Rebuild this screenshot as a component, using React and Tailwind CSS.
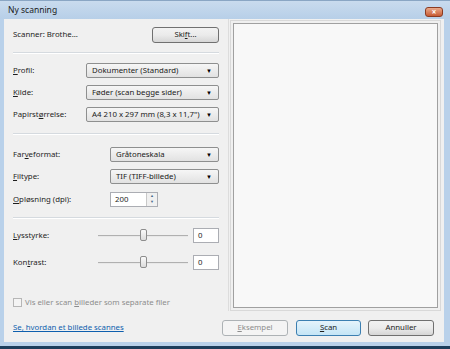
import React from "react";

const font = { fontFamily: '"Noto Sans", "Open Sans", sans-serif' };

// Small helper for a dropdown box
const Select = ({ value, width }) => (
  <div
    className={`flex h-[15px] items-center justify-between whitespace-nowrap rounded-[2px] border border-[#8e8f8f] bg-gradient-to-b from-[#f6f6f6] to-[#e2e2e2] pl-[5px] pr-[6px] text-[#1a1a1a] ${width}`}
  >
    <span>{value}</span>
    <span className="text-[6px] leading-none text-black">▼</span>
  </div>
);

const Separator = () => (
  <div className="flex flex-col">
    <div className="h-px bg-[#d5dadf]" />
    <div className="h-px bg-white" />
  </div>
);

const Slider = () => (
  <div className="relative h-[15px] w-[90px]">
    <div className="absolute left-0 right-0 top-[7px] h-[2px] border-t border-[#b0b0b0] bg-[#e8e8e8]" />
    <div className="absolute left-[42px] top-[1px] h-[12px] w-[7px] rounded-[2px] border border-[#8d8d8d] bg-gradient-to-b from-[#fafafa] to-[#dcdcdc]" />
  </div>
);

const App = () => {
  return (
    <div
      className="flex h-[349px] w-[450px] flex-col whitespace-nowrap bg-[#b9d1ea] text-[7.8px] text-[#1e1e1e]"
      style={font}
    >
      {/* Title bar */}
      <div className="flex h-[19px] items-center justify-between border-t border-[#8aa6c4] bg-gradient-to-b from-[#c9dbee] to-[#b7cfe8] pl-[8px] pr-[7px]">
        <span className="text-[8.5px] text-[#1a1a1a]">Ny scanning</span>
        <div className="mt-[4px] flex h-[10px] w-[18px] items-center justify-center rounded-[3px] border border-[#8b3b22] bg-gradient-to-b from-[#e9a98a] to-[#c75a32] text-[8px] font-bold leading-none text-white">
          ×
        </div>
      </div>

      <div className="flex flex-1">
        <div className="w-[4px]" />
        {/* Client area */}
        <div className="flex flex-1 flex-col bg-[#f0f0f0]">
          <div className="flex h-[292px]">
            {/* Left panel */}
            <div className="flex w-[224px] flex-col pl-[9px] pr-[9px]">
              <div className="mt-[8px] flex h-[16px] items-center justify-between">
                <span>Scanner: Brothe...</span>
                <div className="flex h-[16px] w-[67px] items-center justify-center rounded-[3px] border border-[#707070] bg-gradient-to-b from-[#f2f2f2] via-[#ebebeb] to-[#d6d6d6]">
                  Ski<u>f</u>t...
                </div>
              </div>
              <div className="mt-[9px]">
                <Separator />
              </div>

              <div className="mt-[9px] flex h-[15px] items-center justify-between">
                <span>
                  <u>P</u>rofil:
                </span>
                <Select value="Dokumenter (Standard)" width="w-[133px]" />
              </div>
              <div className="mt-[7px] flex h-[15px] items-center justify-between">
                <span>
                  <u>K</u>ilde:
                </span>
                <Select value="Føder (scan begge sider)" width="w-[133px]" />
              </div>
              <div className="mt-[7px] flex h-[15px] items-center justify-between">
                <span>
                  Papirst<u>ø</u>rrelse:
                </span>
                <Select value="A4 210 x 297 mm (8,3 x 11,7&quot;)" width="w-[133px]" />
              </div>
              <div className="mt-[11px] flex flex-col gap-px">
                <Separator />
              </div>

              <div className="mt-[12px] flex h-[15px] items-center justify-between">
                <span>
                  Far<u>v</u>eformat:
                </span>
                <Select value="Gråtoneskala" width="w-[109px]" />
              </div>
              <div className="mt-[7px] flex h-[15px] items-center justify-between">
                <span>
                  <u>F</u>iltype:
                </span>
                <Select value="TIF (TIFF-billede)" width="w-[109px]" />
              </div>
              <div className="mt-[8px] flex h-[15px] items-center">
                <span className="w-[97px]">
                  <u>O</u>pløsning (dpi):
                </span>
                <div className="flex h-[15px] w-[48px] border border-[#abadb3] bg-white">
                  <span className="flex-1 pl-[4px] leading-[13px]">200</span>
                  <div className="flex w-[11px] flex-col border-l border-[#c8c8c8] bg-[#f0f0f0] text-[4px] leading-[6px] text-[#4a6a8a]">
                    <span className="text-center">▲</span>
                    <span className="text-center">▼</span>
                  </div>
                </div>
              </div>
              <div className="mt-[10px]">
                <Separator />
              </div>

              <div className="mt-[9px] flex h-[15px] items-center">
                <span className="w-[85px]">
                  <u>L</u>ysstyrke:
                </span>
                <Slider />
                <div className="ml-[5px] h-[15px] w-[26px] border border-[#abadb3] bg-white pl-[4px] leading-[13px]">
                  0
                </div>
              </div>
              <div className="mt-[12px] flex h-[15px] items-center">
                <span className="w-[85px]">
                  Kon<u>t</u>rast:
                </span>
                <Slider />
                <div className="ml-[5px] h-[15px] w-[26px] border border-[#abadb3] bg-white pl-[4px] leading-[13px]">
                  0
                </div>
              </div>

              <div className="mt-[27px] flex items-center gap-[3px] text-[#8d8d8d]">
                <div className="h-[9px] w-[9px] border border-[#b6b6b6] bg-[#f4f4f4]" />
                <span>
                  Vis eller scan <u>b</u>illeder som separate filer
                </span>
              </div>
            </div>

            <div className="w-px bg-[#dcdcdc]" />

            {/* Preview */}
            <div className="ml-[1px] mt-[1px] h-[291px] w-[211px] border border-[#d9d9d9] p-[2px]">
              <div className="h-full w-full border border-[#a0a0a0] bg-[#f8f8f8]" />
            </div>
          </div>

          {/* Bottom row */}
          <div className="mt-[9px] flex h-[16px] items-center pl-[9px]">
            <span className="flex-1 text-[#0e5fae] underline">Se, hvordan et billede scannes</span>
            <div className="flex h-[16px] w-[66px] items-center justify-center rounded-[3px] border border-[#adb2b5] bg-[#f4f4f4] text-[#8d8d8d]">
              <u>E</u>ksempel
            </div>
            <div className="ml-[8px] flex h-[16px] w-[65px] items-center justify-center rounded-[3px] border border-[#3c7fb1] bg-gradient-to-b from-[#e5f3fb] to-[#c4e5f6]">
              <u>S</u>can
            </div>
            <div className="ml-[7px] mr-[10px] flex h-[16px] w-[66px] items-center justify-center rounded-[3px] border border-[#707070] bg-gradient-to-b from-[#f2f2f2] via-[#ebebeb] to-[#d6d6d6]">
              Annuller
            </div>
          </div>
        </div>
        <div className="w-[6px]" />
      </div>

      <div className="h-[4px]" />
      <div className="h-[3px] bg-[#1d3e5c]" />
    </div>
  );
};

export default App;
